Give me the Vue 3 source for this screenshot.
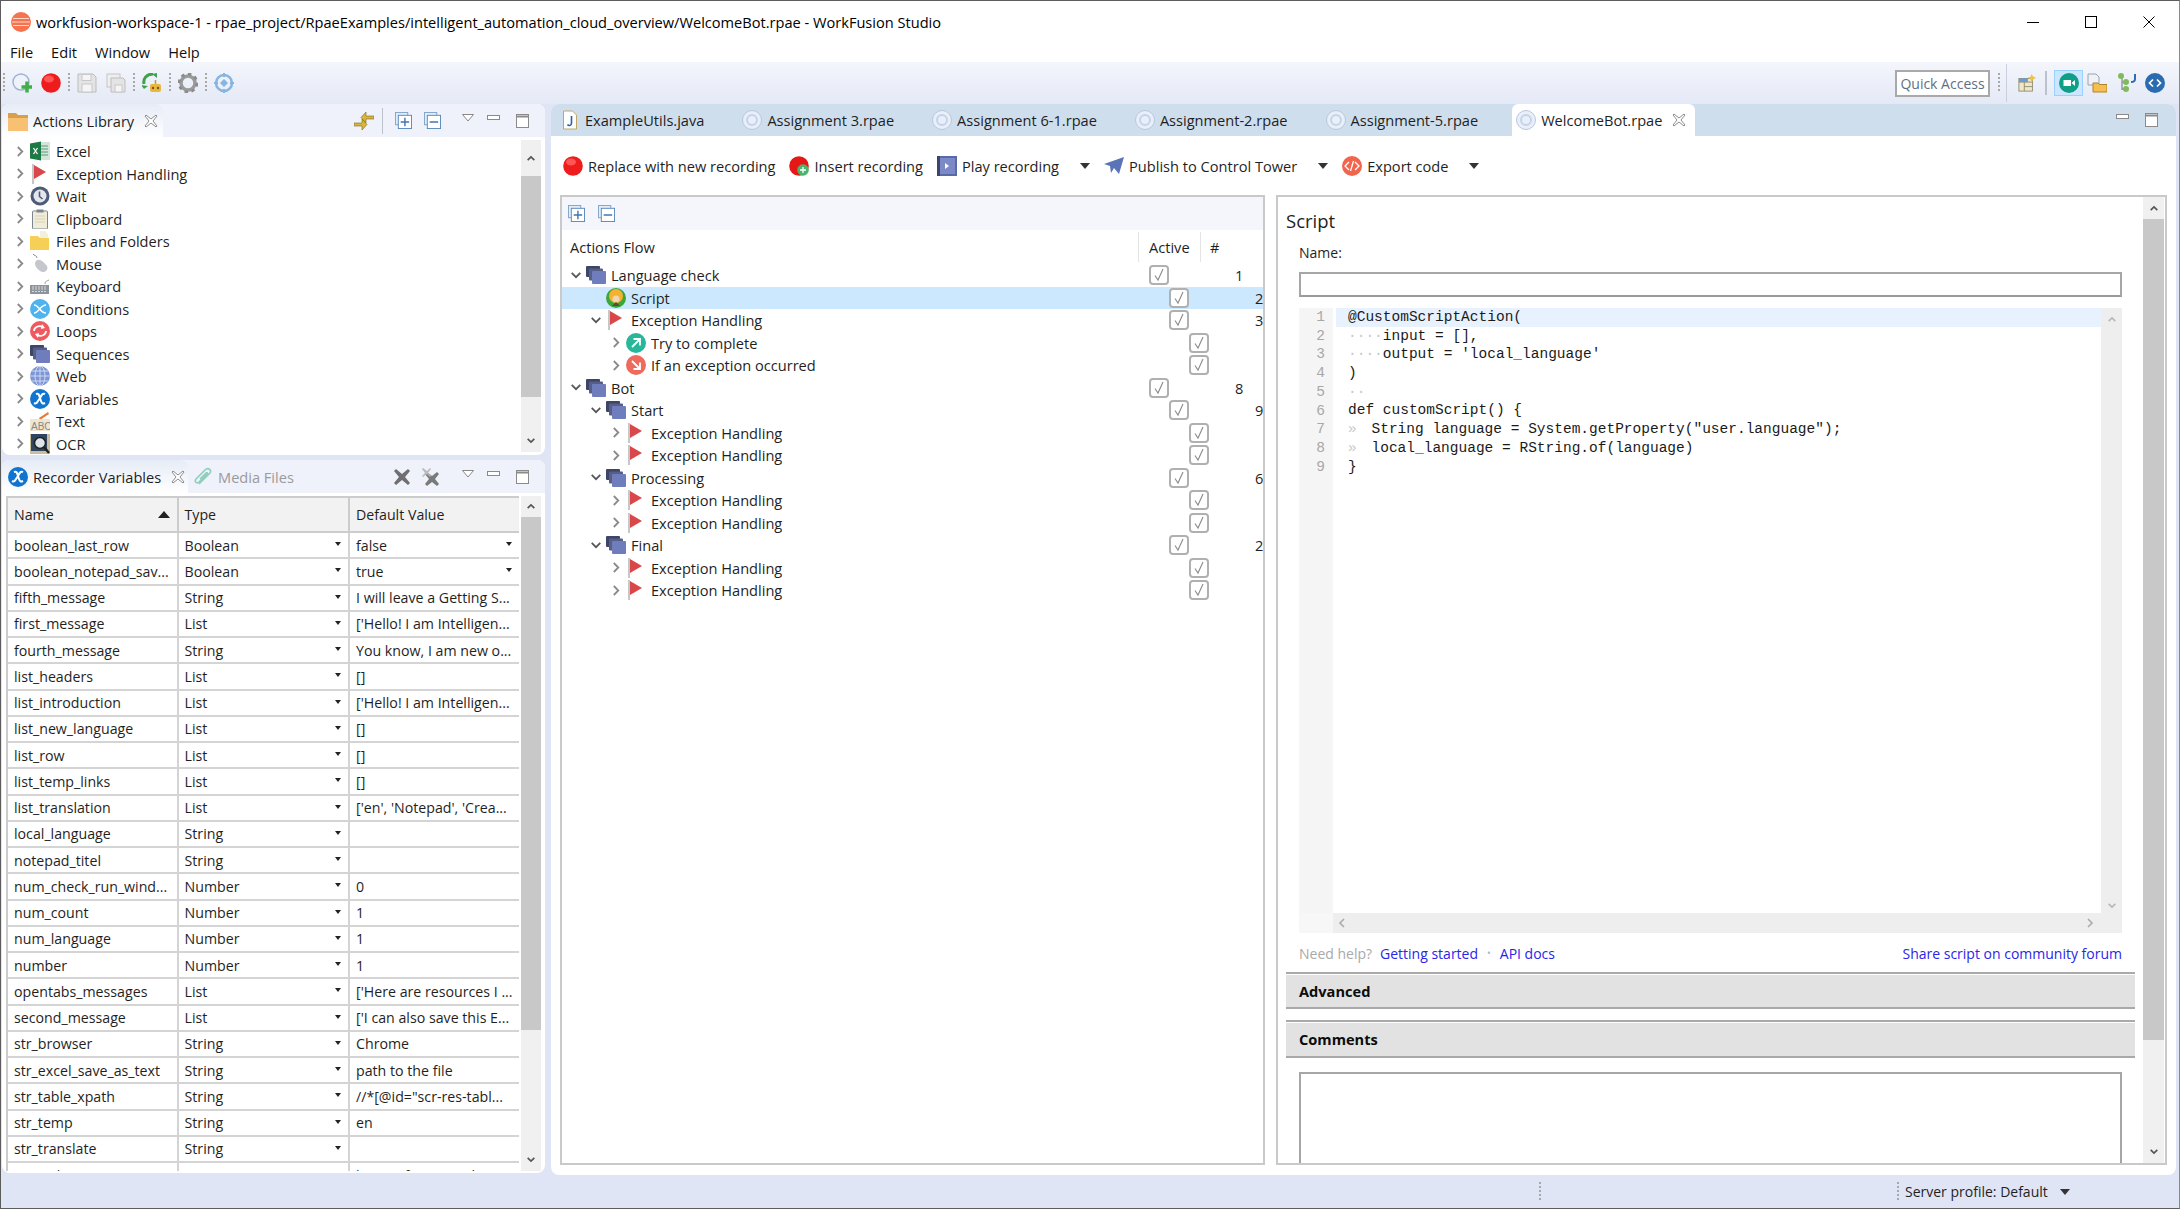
<template>
  <svg class="sprite" width="0" height="0">
    <defs>
      <symbol id="i-chev-r" viewBox="0 0 10 14"><path d="M2 2l5 5-5 5" fill="none" stroke="#8a8a8a" stroke-width="2"/></symbol>
      <symbol id="i-chev-d" viewBox="0 0 14 10"><path d="M2 2l5 5 5-5" fill="none" stroke="#555" stroke-width="2"/></symbol>
      <symbol id="i-up" viewBox="0 0 12 8"><path d="M2 6l4-4 4 4" fill="none" stroke="#555" stroke-width="2"/></symbol>
      <symbol id="i-down" viewBox="0 0 12 8"><path d="M2 2l4 4 4-4" fill="none" stroke="#555" stroke-width="2"/></symbol>
      <symbol id="i-excel" viewBox="0 0 20 20"><rect x="7" y="1" width="13" height="18" fill="#d5e5da"/><path d="M11 5h7M11 8h7M11 11h7M11 14h7" stroke="#5c9c78"/><path d="M0 2.500l11-2v19l-11-2z" fill="#1d7a45"/><path d="M3.500 7l4 6M7.500 7l-4 6" stroke="#fff" stroke-width="1.300"/></symbol>
      <symbol id="i-flag" viewBox="0 0 20 20"><path d="M3 0v20" stroke="#b5b5b5" stroke-width="1.500"/><path d="M4 1l12 7-12 7z" fill="#d9474b"/></symbol>
      <symbol id="i-wait" viewBox="0 0 20 20"><circle cx="10" cy="10" r="9.500" fill="#4d5a78"/><circle cx="10" cy="10" r="6.500" fill="#e3e6ec"/><path d="M9.500 5.500v5l3 2.500" fill="none" stroke="#4d5a78" stroke-width="1.600"/></symbol>
      <symbol id="i-clip" viewBox="0 0 20 20"><rect x="2.500" y="2" width="15" height="18" rx="1" fill="#f0ecd9" stroke="#7d8590"/><rect x="6.500" y="0.500" width="7" height="3" fill="#7d8590"/><path d="M5 7h10M5 10h10M5 13h10" stroke="#d8d2b5"/></symbol>
      <symbol id="i-folder" viewBox="0 0 20 20"><path d="M10 0h5l3 3v6h-8z" fill="#f4efd8"/><path d="M0 5h8l2 2h9v12H0z" fill="#f6cf57"/></symbol>
      <symbol id="i-mouse" viewBox="0 0 20 20"><path d="M3 0c1 2 4 1 4 4" fill="none" stroke="#8a8a8a"/><path d="M6 7c3-3 7 0 11 5 2 4-3 8-7 5C7 15 3 10 6 7z" fill="#c4c8cc"/></symbol>
      <symbol id="i-kbd" viewBox="0 0 20 20"><path d="M15 8c0-3 2-3 4-4" fill="none" stroke="#999"/><path d="M0 9h19v9H0z" fill="#8f949b"/><path d="M2 11h15M2 13h15M2 15.500h15" stroke="#d6d8db" stroke-dasharray="2 1"/></symbol>
      <symbol id="i-cond" viewBox="0 0 20 20"><circle cx="10" cy="10" r="10" fill="#4fb3f0"/><path d="M4 6c5 0 6 8 12 8M4 14c5 0 6-8 12-8" fill="none" stroke="#fff" stroke-width="1.400"/></symbol>
      <symbol id="i-loop" viewBox="0 0 20 20"><circle cx="10" cy="10" r="10" fill="#ef5a5f"/><path d="M4 10c0-4 5-6 9-4M16 10c0 4-5 6-9 4" fill="none" stroke="#fff" stroke-width="1.800"/><path d="M12 3l3 4-4 1zM8 17l-3-4 4-1z" fill="#fff"/></symbol>
      <symbol id="i-seq" viewBox="0 0 20 20"><rect x="0" y="1" width="14" height="11" rx="1" fill="#3d4668"/><rect x="3" y="3.500" width="14" height="12" rx="1" fill="#555f88"/><rect x="6" y="6" width="14" height="13" rx="1" fill="#6f7dbd"/></symbol>
      <symbol id="i-web" viewBox="0 0 20 20"><circle cx="10" cy="10" r="10" fill="#7d96d6"/><path d="M0 10h20M2 5h16M2 15h16M10 0v20" stroke="#dfe6f7" stroke-width=".8"/><ellipse cx="10" cy="10" rx="5" ry="10" fill="none" stroke="#dfe6f7" stroke-width=".8"/></symbol>
      <symbol id="i-var" viewBox="0 0 20 20"><circle cx="10" cy="10" r="10" fill="#0f75d0"/><path d="M6 5c3-1 3 1 4 4l1 3c1 3 2 3 4 2M15 5c-2-1-3 0-5 4l-2 3c-1 2-2 3-4 2" fill="none" stroke="#fff" stroke-width="2"/></symbol>
      <symbol id="i-text" viewBox="0 0 20 20"><path d="M9 7l9-6 1 2-9 6z" fill="#e9793b"/><rect x="0" y="8" width="20" height="12" fill="#eee6cf"/><text x="1" y="18.500" font-size="10" font-family="Liberation Sans" fill="#888">ABC</text></symbol>
      <symbol id="i-ocr" viewBox="0 0 20 20"><rect x="0" y="0" width="20" height="20" fill="#c9bf9d"/><rect x="1" y="0" width="16" height="17" fill="#2f4560"/><circle cx="10" cy="9" r="5.500" fill="#dde4ea" stroke="#222" stroke-width="1.500"/><path d="M14 13l5 6" stroke="#222" stroke-width="2.500"/></symbol>
      <symbol id="i-rpae" viewBox="0 0 20 20"><circle cx="10" cy="10" r="9.500" fill="#e9eff8" stroke="#b8c6de"/><circle cx="10" cy="10" r="5" fill="none" stroke="#c5d3ea" stroke-width="2"/></symbol>
      <symbol id="i-java" viewBox="0 0 20 20"><path d="M3.500 1h9l4 4v14h-13z" fill="#fff" stroke="#c1a868"/><path d="M11.500 6v7c0 3-3 3-4 1.500" fill="none" stroke="#2d5fa8" stroke-width="1.600"/></symbol>
      <symbol id="i-lib" viewBox="0 0 20 20"><path d="M0 2h8l2 2h10v16H0z" fill="#d8a04a"/><path d="M0 7h20v13H0z" fill="#f8c073"/></symbol>
      <symbol id="i-clip2" viewBox="0 0 20 20"><path d="M6 17L17 6c2-3-2-6-5-3L3 12c-2 3 1 5 3 3l8-8c1-1 0-2-1-1l-6 6" fill="none" stroke="#8fd0bd" stroke-width="1.600"/></symbol>
      <symbol id="i-close" viewBox="0 0 14 14"><path d="M2 1l5 4 5-4 1 1-4 5 4 5-1 1-5-4-5 4-1-1 4-5-4-5z" fill="#fff" stroke="#8d8d8d"/></symbol>
      <symbol id="i-menu" viewBox="0 0 12 8"><path d="M.5.500h11L6 7z" fill="#fff" stroke="#888"/></symbol>
      <symbol id="i-min" viewBox="0 0 13 6"><rect x=".5" y=".5" width="12" height="4" fill="#fff" stroke="#8a8a8a"/></symbol>
      <symbol id="i-max" viewBox="0 0 13 14"><rect x=".5" y=".5" width="12" height="13" fill="#fff" stroke="#8a8a8a"/><path d="M.5 2.500h12" stroke="#8a8a8a" stroke-width="2"/></symbol>
      <symbol id="i-expand" viewBox="0 0 18 18"><rect x=".5" y=".5" width="13" height="13" fill="#e3edf8" stroke="#7fa3cc"/><rect x="3.500" y="3.500" width="14" height="14" fill="#fff" stroke="#5a88bd"/><path d="M10.500 6v9M6 10.500h9" stroke="#3f76b3" stroke-width="1.500"/></symbol>
      <symbol id="i-collapse" viewBox="0 0 18 18"><rect x=".5" y=".5" width="13" height="13" fill="#e3edf8" stroke="#7fa3cc"/><rect x="3.500" y="3.500" width="14" height="14" fill="#fff" stroke="#5a88bd"/><path d="M6 10.500h9" stroke="#3f76b3" stroke-width="1.500"/></symbol>
      <symbol id="i-pin" viewBox="0 0 20 20"><path d="M12 1v4h8v3h-8v4L7 6.500zM8 19v-4H0v-3h8V8l5 5.500z" fill="#d9b53a" stroke="#7d6a22" stroke-width=".6"/></symbol>
      <symbol id="i-x" viewBox="0 0 18 18"><path d="M3 1l6 5 6-5 2 2-5 6 5 6-2 2-6-5-6 5-2-2 5-6-5-6z" fill="#6f6f6f"/></symbol>
      <symbol id="i-xx" viewBox="0 0 20 20"><path d="M6 5l5 4 5-4 2 2-4 5 4 5-2 2-5-4-5 4-2-2 4-5-4-5z" fill="#7a7a7a"/><path d="M2 1l4 3 3-3 1 1-3 4 3 3-1 1-3-3-4 3-1-1 3-3-3-4z" fill="#bbb"/></symbol>
      <symbol id="i-record" viewBox="0 0 20 20"><circle cx="10" cy="10" r="9.800" fill="#ee1c1c"/><ellipse cx="8" cy="6" rx="5" ry="3.500" fill="#f55"/></symbol>
      <symbol id="i-insert" viewBox="0 0 20 20"><circle cx="10" cy="10" r="9.800" fill="#e61717"/><circle cx="14" cy="14" r="5.800" fill="#4ab56c"/><path d="M14 11v6M11 14h6" stroke="#fff" stroke-width="1.300"/></symbol>
      <symbol id="i-play" viewBox="0 0 20 20"><rect width="20" height="20" fill="#5a6aa8"/><rect x="2" y="2" width="16" height="16" fill="#7b89c6"/><path d="M8 7l4 3-4 3z" fill="#fff"/><path d="M0 0h3v20H0z" fill="#3d4668"/></symbol>
      <symbol id="i-publish" viewBox="0 0 20 20"><path d="M0 8L20 1l-5 17-5-6-3 5-1-7z" fill="#5b73b8"/></symbol>
      <symbol id="i-export" viewBox="0 0 20 20"><circle cx="10" cy="10" r="10" fill="#f1654d"/><path d="M7 6l-4 4 4 4M13 6l4 4-4 4M11.500 5l-3 10" fill="none" stroke="#fff" stroke-width="1.300"/></symbol>
      <symbol id="i-script" viewBox="0 0 20 20"><circle cx="10" cy="10" r="10" fill="#3ca63c"/><circle cx="10" cy="8" r="7" fill="#f5b230"/><circle cx="10" cy="11" r="3.500" fill="#f0d6b4"/><path d="M6 18l4-4 4 4z" fill="#5d4a3a"/></symbol>
      <symbol id="i-try" viewBox="0 0 20 20"><circle cx="10" cy="10" r="10" fill="#27b79b"/><path d="M6 14l8-8M7.500 6H14v6.500" fill="none" stroke="#fff" stroke-width="1.800"/></symbol>
      <symbol id="i-catch" viewBox="0 0 20 20"><circle cx="10" cy="10" r="10" fill="#ee6a5c"/><path d="M6 6l8 8M14 7.500V14H7.500" fill="none" stroke="#fff" stroke-width="1.800"/></symbol>
      <symbol id="i-add" viewBox="0 0 20 20"><circle cx="9" cy="9" r="8" fill="#eef2fa" stroke="#9fb2d2" stroke-width="1.400"/><path d="M15 8.500v11M9.500 14h11" stroke="#3fae49" stroke-width="3.500"/></symbol>
      <symbol id="i-save" viewBox="0 0 20 20"><path d="M1 1h15l3 3v15H1z" fill="#e4e4e4" stroke="#bdbdbd"/><rect x="5" y="1.500" width="9" height="6" fill="#f5f5f5" stroke="#c8c8c8"/><rect x="5" y="11" width="10" height="8" fill="#f5f5f5" stroke="#c8c8c8"/></symbol>
      <symbol id="i-saveall" viewBox="0 0 20 20"><rect x="1" y="1" width="13" height="13" fill="#eee" stroke="#c5c5c5"/><path d="M5 5h12l2 2v12H5z" fill="#e4e4e4" stroke="#bdbdbd"/><rect x="9" y="12" width="7" height="7" fill="#f5f5f5" stroke="#c8c8c8"/></symbol>
      <symbol id="i-run" viewBox="0 0 20 20"><path d="M11 1C4 1 1 6 2 11" fill="none" stroke="#3fa14a" stroke-width="3"/><path d="M6 13l-4 3-3-4z" fill="#3fa14a"/><path d="M10 1l5-1v5z" fill="#3fa14a"/><rect x="8" y="11" width="11" height="8" rx="2" fill="#e9b63f"/><circle cx="11" cy="15" r="1.200" fill="#7a5a10"/><circle cx="16" cy="15" r="1.200" fill="#7a5a10"/><path d="M13.500 11V7" stroke="#c89a2a" stroke-width="1.500"/></symbol>
      <symbol id="i-gear" viewBox="0 0 20 20"><circle cx="10" cy="10" r="7" fill="none" stroke="#9a9a9a" stroke-width="3.500"/><circle cx="10" cy="10" r="9" fill="none" stroke="#8a8a8a" stroke-width="2.500" stroke-dasharray="3.500 3.500"/></symbol>
      <symbol id="i-target" viewBox="0 0 20 20"><circle cx="10" cy="10" r="8" fill="none" stroke="#85b5e0" stroke-width="2.500"/><path d="M10 0v4M10 16v4M0 10h4M16 10h4" stroke="#85b5e0" stroke-width="2"/><path d="M10 6l4 4-4 4-4-4z" fill="#85b5e0"/></symbol>
      <symbol id="i-persp" viewBox="0 0 20 20"><rect x="1" y="5" width="15" height="14" fill="#f0e6c8" stroke="#8c8c70"/><path d="M1 9h15M7 9v10M7 14h9" stroke="#8c8c70"/><rect x="1" y="5" width="10" height="4" fill="#6e9bd0"/><path d="M15 0l2 3 3 1-3 2-2 3-1-3-3-2 3-1z" fill="#f0c33c"/></symbol>
      <symbol id="i-cam" viewBox="0 0 20 20"><circle cx="10" cy="10" r="10" fill="#0f9e86"/><rect x="4.500" y="7" width="7.500" height="6" fill="#fff"/><path d="M12.500 10l3.500-3v6z" fill="#fff"/></symbol>
      <symbol id="i-docs" viewBox="0 0 20 20"><path d="M1 1h8l3 3v8H1z" fill="#eef1f6" stroke="#9aa3b0"/><path d="M6 10h5l1.500 1.500H20V19H6z" fill="#f5bf4f" stroke="#b0812a"/></symbol>
      <symbol id="i-tree" viewBox="0 0 20 20"><path d="M6 2v15M6 9h6M6 16h6" stroke="#888" stroke-width="1.200"/><circle cx="5" cy="3" r="3" fill="#7fbb5d"/><circle cx="10" cy="9" r="3" fill="#7fbb5d"/><circle cx="10" cy="16" r="3" fill="#7fbb5d"/><path d="M19 1v5c0 2-2 3-4 3" fill="none" stroke="#2e6db4" stroke-width="2"/></symbol>
      <symbol id="i-code" viewBox="0 0 20 20"><circle cx="10" cy="10" r="10" fill="#2b6cb0"/><path d="M8 6.500L4.500 10 8 13.500M12 6.500l3.500 3.500-3.500 3.500" fill="none" stroke="#fff" stroke-width="1.700"/></symbol>
      <symbol id="i-app" viewBox="0 0 20 20"><circle cx="10" cy="10" r="10" fill="#f5734f"/><path d="M2 6.500h16M1 10h18M2 13.500h16" stroke="#ffd9c9" stroke-width="1.200"/></symbol>
    </defs>
  </svg>

  <div class="window">
    <header class="titlebar">
      <svg class="ic20"><use href="#i-app" /></svg>
      <span class="title-text">workfusion-workspace-1 - rpae_project/RpaeExamples/intelligent_automation_cloud_overview/WelcomeBot.rpae - WorkFusion Studio</span>
      <div class="win-btns">
        <svg width="12" height="12" viewBox="0 0 12 12"><path d="M0 6.500h12" stroke="#000" /></svg>
        <svg width="12" height="12" viewBox="0 0 12 12"><rect x=".5" y=".5" width="11" height="11" fill="none" stroke="#000" /></svg>
        <svg width="12" height="12" viewBox="0 0 12 12"><path d="M.5.500l11 11M11.500.5l-11 11" stroke="#000" /></svg>
      </div>
    </header>

    <nav class="menubar">
      <span v-for="m in menus" :key="m">{{ m }}</span>
    </nav>

    <div class="toolbar">
      <template v-for="(t, i) in mainTools" :key="i">
        <span v-if="t === '|'" class="grip"></span>
        <svg v-else class="ic20 tool"><use :href="'#i-' + t" /></svg>
      </template>
      <div class="tool-right">
        <span class="quick">Quick Access</span>
        <span class="grip grip-q"></span>
        <span class="curve"></span>
        <svg class="ic18"><use href="#i-persp" /></svg>
        <span class="vsep"></span>
        <span class="cam-btn"><svg class="ic20"><use href="#i-cam" /></svg></span>
        <svg class="ic20"><use href="#i-docs" /></svg>
        <svg class="ic20 tree-ic"><use href="#i-tree" /></svg>
        <svg class="ic20"><use href="#i-code" /></svg>
      </div>
    </div>

    <main class="workspace">
      <div class="left-col">
        <section class="panel lib-panel">
          <div class="panel-head">
            <div class="view-tab lib-tab">
              <svg class="ic20"><use href="#i-lib" /></svg>
              <span>Actions Library</span>
              <svg class="close"><use href="#i-close" /></svg>
            </div>
            <div class="head-tools">
              <svg class="ic20 pin"><use href="#i-pin" /></svg>
              <span class="vsep small"></span>
              <svg class="ic17 ex1"><use href="#i-expand" /></svg>
              <svg class="ic17 ex2"><use href="#i-collapse" /></svg>
              <svg class="menu-ic"><use href="#i-menu" /></svg>
              <svg class="min-ic"><use href="#i-min" /></svg>
              <svg class="max-ic"><use href="#i-max" /></svg>
            </div>
          </div>
          <div class="lib-body">
            <ul class="lib-tree">
              <li v-for="a in library" :key="a.name">
                <svg class="chev-r"><use href="#i-chev-r" /></svg>
                <svg class="ic20 lib-ic"><use :href="'#i-' + a.icon" /></svg>
                <span>{{ a.name }}</span>
              </li>
            </ul>
            <div class="sb sb-lib">
              <div class="sb-top"><svg class="arrow"><use href="#i-up" /></svg></div>
              <div class="sb-thumb"></div>
              <div class="sb-rest"><svg class="arrow"><use href="#i-down" /></svg></div>
            </div>
          </div>
        </section>

        <section class="panel var-panel">
          <div class="panel-head">
            <div class="view-tab var-tab">
              <svg class="ic20"><use href="#i-var" /></svg>
              <span>Recorder Variables</span>
              <svg class="close"><use href="#i-close" /></svg>
            </div>
            <div class="media-tab">
              <svg class="ic20"><use href="#i-clip2" /></svg>
              <span>Media Files</span>
            </div>
            <div class="head-tools">
              <svg class="ic18 del1"><use href="#i-x" /></svg>
              <svg class="ic20 del2"><use href="#i-xx" /></svg>
              <svg class="menu-ic"><use href="#i-menu" /></svg>
              <svg class="min-ic"><use href="#i-min" /></svg>
              <svg class="max-ic"><use href="#i-max" /></svg>
            </div>
          </div>
          <div class="var-body">
            <div class="var-table">
              <div class="var-row var-header">
                <div class="cell">Name<span class="sort"></span></div>
                <div class="cell">Type</div>
                <div class="cell">Default Value</div>
              </div>
              <div v-for="v in variables" :key="v.name" class="var-row">
                <div class="cell">{{ v.name }}</div>
                <div class="cell">{{ v.type }}<span class="drop"></span></div>
                <div class="cell">{{ v.value }}<span v-if="v.type === 'Boolean'" class="drop"></span></div>
              </div>
            </div>
            <div class="sb sb-var">
              <div class="sb-top"><svg class="arrow"><use href="#i-up" /></svg></div>
              <div class="sb-thumb"></div>
              <div class="sb-rest"><svg class="arrow"><use href="#i-down" /></svg></div>
            </div>
          </div>
        </section>
      </div>

      <section class="editor-panel">
        <div class="editor-tabs">
          <div v-for="t in editorTabs" :key="t.name" class="ed-tab">
            <svg class="ic20"><use :href="'#i-' + t.icon" /></svg>
            <span>{{ t.name }}</span>
          </div>
          <div class="ed-tab active">
            <svg class="ic20"><use href="#i-rpae" /></svg>
            <span>WelcomeBot.rpae</span>
            <svg class="close"><use href="#i-close" /></svg>
          </div>
          <div class="ed-controls">
            <svg class="min-ic"><use href="#i-min" /></svg>
            <svg class="max-ic"><use href="#i-max" /></svg>
          </div>
        </div>

        <div class="rec-bar">
          <span class="rec-item"><svg class="ic20"><use href="#i-record" /></svg>Replace with new recording</span>
          <span class="rec-item"><svg class="ic20"><use href="#i-insert" /></svg>Insert recording</span>
          <span class="rec-item"><svg class="ic20"><use href="#i-play" /></svg>Play recording<span class="drop2"></span></span>
          <span class="rec-item"><svg class="ic20"><use href="#i-publish" /></svg>Publish to Control Tower<span class="drop2"></span></span>
          <span class="rec-item"><svg class="ic20"><use href="#i-export" /></svg>Export code<span class="drop2"></span></span>
        </div>

        <div class="split">
          <div class="flow">
            <div class="flow-tools">
              <svg class="ic17"><use href="#i-expand" /></svg>
              <svg class="ic17"><use href="#i-collapse" /></svg>
            </div>
            <div class="flow-head">
              <span class="fh-name">Actions Flow</span>
              <span class="fh-active">Active</span>
              <span class="fh-num">#</span>
            </div>
            <div v-for="(r, i) in flow" :key="i" class="flow-row" :class="{ selected: r.name === 'Script' }">
              <div class="flow-name" :class="'lvl' + r.level">
                <span class="tw">
                  <svg v-if="r.open === true" class="tw-open"><use href="#i-chev-d" /></svg>
                  <svg v-else-if="r.open === false" class="tw-closed"><use href="#i-chev-r" /></svg>
                </span>
                <svg class="ic20"><use :href="'#i-' + r.icon" /></svg>
                <span>{{ r.name }}</span>
              </div>
              <div class="flow-check">
                <span class="check">
                  <svg width="14" height="14" viewBox="0 0 14 14"><path d="M3 7.500l3 4.500 5-11" fill="none" stroke="#8a8a8a" stroke-width="1.100" /></svg>
                </span>
              </div>
              <div class="flow-num">{{ r.num }}</div>
            </div>
          </div>

          <div class="props">
            <div class="props-body">
              <h2 class="props-title">Script</h2>
              <div class="field-label">Name:</div>
              <div class="text-input"></div>
              <div class="code-ed">
                <div class="gutter">
                  <div v-for="(c, i) in code" :key="i">{{ i + 1 }}</div>
                </div>
                <div class="code">
                  <div v-for="(c, i) in code" :key="i" class="code-line" :class="{ current: i === 0 }">
                    <span v-if="c.ws" class="ws" :class="{ tab: c.ws === '»' }">{{ c.ws }}</span>{{ c.text }}
                  </div>
                </div>
                <div class="code-vs">
                  <svg class="arrow light"><use href="#i-up" /></svg>
                  <svg class="arrow light"><use href="#i-down" /></svg>
                </div>
                <div class="code-corner"></div>
                <div class="code-hs">
                  <svg class="arrow-h" viewBox="0 0 8 12"><path d="M6 2L2 6l4 4" fill="none" stroke="#aaa" stroke-width="1.600" /></svg>
                  <svg class="arrow-h" viewBox="0 0 8 12"><path d="M2 2l4 4-4 4" fill="none" stroke="#aaa" stroke-width="1.600" /></svg>
                </div>
              </div>
              <div class="help">
                <span class="help-need">Need help?</span>
                <a class="link">Getting started</a>
                <span class="help-dot">•</span>
                <a class="link">API docs</a>
                <a class="link share">Share script on community forum</a>
              </div>
              <div class="section adv">Advanced</div>
              <div class="section com">Comments</div>
              <div class="comment-box"></div>
            </div>
            <div class="sb sb-props">
              <div class="sb-top"><svg class="arrow"><use href="#i-up" /></svg></div>
              <div class="sb-thumb"></div>
              <div class="sb-rest"><svg class="arrow"><use href="#i-down" /></svg></div>
            </div>
          </div>
        </div>
      </section>
    </main>

    <footer class="statusbar">
      <span class="grip status-grip1"></span>
      <span class="grip status-grip2"></span>
      <span class="status-text">Server profile: Default</span>
      <span class="drop2 status-drop"></span>
    </footer>
  </div>
</template>

<script setup>
const menus = ['File', 'Edit', 'Window', 'Help']
const mainTools = ['|', 'add', 'record', '|', 'save', 'saveall', '|', 'run', '|', 'gear', '|', 'target']

const library = [
  { name: 'Excel', icon: 'excel' },
  { name: 'Exception Handling', icon: 'flag' },
  { name: 'Wait', icon: 'wait' },
  { name: 'Clipboard', icon: 'clip' },
  { name: 'Files and Folders', icon: 'folder' },
  { name: 'Mouse', icon: 'mouse' },
  { name: 'Keyboard', icon: 'kbd' },
  { name: 'Conditions', icon: 'cond' },
  { name: 'Loops', icon: 'loop' },
  { name: 'Sequences', icon: 'seq' },
  { name: 'Web', icon: 'web' },
  { name: 'Variables', icon: 'var' },
  { name: 'Text', icon: 'text' },
  { name: 'OCR', icon: 'ocr' },
]

const variables = [
  { name: 'boolean_last_row', type: 'Boolean', value: 'false' },
  { name: 'boolean_notepad_sav...', type: 'Boolean', value: 'true' },
  { name: 'fifth_message', type: 'String', value: 'I will leave a Getting S...' },
  { name: 'first_message', type: 'List', value: "['Hello! I am Intelligen..." },
  { name: 'fourth_message', type: 'String', value: 'You know, I am new o...' },
  { name: 'list_headers', type: 'List', value: '[]' },
  { name: 'list_introduction', type: 'List', value: "['Hello! I am Intelligen..." },
  { name: 'list_new_language', type: 'List', value: '[]' },
  { name: 'list_row', type: 'List', value: '[]' },
  { name: 'list_temp_links', type: 'List', value: '[]' },
  { name: 'list_translation', type: 'List', value: "['en', 'Notepad', 'Crea..." },
  { name: 'local_language', type: 'String', value: '' },
  { name: 'notepad_titel', type: 'String', value: '' },
  { name: 'num_check_run_wind...', type: 'Number', value: '0' },
  { name: 'num_count', type: 'Number', value: '1' },
  { name: 'num_language', type: 'Number', value: '1' },
  { name: 'number', type: 'Number', value: '1' },
  { name: 'opentabs_messages', type: 'List', value: "['Here are resources I ..." },
  { name: 'second_message', type: 'List', value: "['I can also save this E..." },
  { name: 'str_browser', type: 'String', value: 'Chrome' },
  { name: 'str_excel_save_as_text', type: 'String', value: 'path to the file' },
  { name: 'str_table_xpath', type: 'String', value: '//*[@id="scr-res-tabl...' },
  { name: 'str_temp', type: 'String', value: 'en' },
  { name: 'str_translate', type: 'String', value: '' },
  { name: 'str_website', type: 'String', value: 'https://finance.yah...' },
]

const editorTabs = [
  { name: 'ExampleUtils.java', icon: 'java' },
  { name: 'Assignment 3.rpae', icon: 'rpae' },
  { name: 'Assignment 6-1.rpae', icon: 'rpae' },
  { name: 'Assignment-2.rpae', icon: 'rpae' },
  { name: 'Assignment-5.rpae', icon: 'rpae' },
]

const handler = (num) => ({ name: 'Exception Handling', icon: 'flag', level: 2, open: false, num })
const flow = [
  { name: 'Language check', icon: 'seq', level: 0, open: true, num: 1 },
  { name: 'Script', icon: 'script', level: 1, open: null, num: 2 },
  { name: 'Exception Handling', icon: 'flag', level: 1, open: true, num: 3 },
  { name: 'Try to complete', icon: 'try', level: 2, open: false, num: '' },
  { name: 'If an exception occurred', icon: 'catch', level: 2, open: false, num: '' },
  { name: 'Bot', icon: 'seq', level: 0, open: true, num: 8 },
  { name: 'Start', icon: 'seq', level: 1, open: true, num: 9 },
  handler(10),
  handler(55),
  { name: 'Processing', icon: 'seq', level: 1, open: true, num: 62 },
  handler(63),
  handler(179),
  { name: 'Final', icon: 'seq', level: 1, open: true, num: 261 },
  handler(262),
  handler(293),
]

const code = [
  { ws: '', text: '@CustomScriptAction(' },
  { ws: '····', text: 'input = [],' },
  { ws: '····', text: "output = 'local_language'" },
  { ws: '', text: ')' },
  { ws: '··', text: '' },
  { ws: '', text: 'def customScript() {' },
  { ws: '»', text: 'String language = System.getProperty("user.language");' },
  { ws: '»', text: 'local_language = RString.of(language)' },
  { ws: '', text: '}' },
]
</script>

<style>
html,
body {
  margin: 0;
  background: #dfe5f5;
}
</style>

<style scoped>
.sprite {
  position: absolute;
}

.window {
  box-sizing: border-box;
  width: 2180px;
  height: 1209px;
  display: flex;
  flex-direction: column;
  overflow: hidden;
  background: #dfe5f5;
  border: 1px solid #5c5c5c;
  border-right-color: #8a8a8a;
  font-family: "Open Sans", "Noto Sans", sans-serif;
  font-size: 14.6px;
  color: #1f1f1f;
}

svg {
  display: block;
  flex: none;
}

.ic20 { width: 20px; height: 20px; }
.ic18 { width: 18px; height: 18px; }
.ic17 { width: 17px; height: 17px; }

.titlebar {
  height: 41px;
  flex: none;
  display: flex;
  align-items: center;
  padding-left: 10px;
  background: #fff;
  color: #000;
}

.title-text {
  margin-left: 5px;
  white-space: nowrap;
}

.win-btns {
  margin-left: auto;
  display: flex;
  gap: 46px;
  padding-right: 24px;
}

.menubar {
  height: 20px;
  flex: none;
  display: flex;
  align-items: center;
  gap: 18px;
  padding: 0 0 0 9px;
  background: #fff;
  color: #111;
}

.toolbar {
  height: 42px;
  flex: none;
  display: flex;
  align-items: center;
  gap: 7px;
  padding-left: 2px;
  background: linear-gradient(#f4f6fc, #e4e9f6);
}

.tool + .tool {
  margin-left: 2px;
}

.grip {
  width: 2px;
  height: 20px;
  background-image: linear-gradient(#a8a8a8 50%, transparent 50%);
  background-size: 2px 4px;
}

.tool-right {
  margin-left: auto;
  display: flex;
  align-items: center;
  padding-right: 14px;
}

.quick {
  box-sizing: border-box;
  width: 95px;
  height: 27px;
  border: 2px solid #a9a9a9;
  background: #fff;
  color: #5f6f85;
  font-size: 14px;
  text-align: center;
  line-height: 23px;
  white-space: nowrap;
}

.grip-q {
  margin-left: 8px;
}

.curve {
  width: 1px;
  height: 38px;
  margin: 0 11px 0 6px;
  background: #c9cfdd;
}

.vsep {
  width: 2px;
  height: 24px;
  margin: 0 7px 0 9px;
  background: #bcc2cc;
}

.cam-btn {
  box-sizing: border-box;
  width: 29px;
  height: 26px;
  margin-right: 4px;
  display: flex;
  align-items: center;
  justify-content: center;
  background: #cde6ff;
  border: 1px solid #99d1ff;
}

.tree-ic {
  margin: 0 9px;
}

.workspace {
  height: 1071px;
  flex: none;
  display: flex;
  gap: 6px;
  padding-left: 1px;
}

.left-col {
  width: 543px;
  flex: none;
  display: flex;
  flex-direction: column;
  gap: 5px;
}

.panel {
  display: flex;
  flex-direction: column;
  background: #fff;
  border-radius: 8px;
  overflow: hidden;
}

.lib-panel { height: 351px; }
.var-panel { height: 713px; }

.panel-head {
  height: 33px;
  flex: none;
  display: flex;
  align-items: stretch;
  background: #eff2fa;
}

.view-tab {
  display: flex;
  align-items: center;
  padding-left: 6px;
  background: linear-gradient(#e6ecf6, #fff);
  border-radius: 8px 8px 0 0;
}

.lib-tab { width: 155px; }
.var-tab { width: 180px; }

.view-tab span {
  margin-left: 5px;
  white-space: nowrap;
}

.close {
  width: 14px;
  height: 14px;
  margin-left: 10px;
}

.media-tab {
  display: flex;
  align-items: center;
  padding-left: 5px;
  color: #9a9a9a;
}

.media-tab span {
  margin-left: 5px;
}

.head-tools {
  margin-left: auto;
  display: flex;
  align-items: center;
  padding-right: 16px;
}

.vsep.small {
  height: 26px;
  width: 1px;
  margin: 0 12px 0 8px;
}

.ex2 {
  margin-left: 12px;
}

.menu-ic {
  width: 12px;
  height: 8px;
  margin: 0 0 6px 21px;
}

.min-ic {
  width: 13px;
  height: 6px;
  margin: 0 0 6px 13px;
}

.max-ic {
  width: 13px;
  height: 14px;
  margin-left: 16px;
}

.del2 {
  margin-left: 10px;
}

.lib-body {
  flex: 1;
  min-height: 0;
  display: flex;
  padding-top: 3px;
}

.lib-tree {
  flex: 1;
  margin: 0;
  padding: 0 0 0 14px;
  list-style: none;
}

.lib-tree li {
  height: 22.5px;
  display: flex;
  align-items: center;
}

.chev-r {
  width: 9px;
  height: 13px;
  margin-right: 5px;
}

.lib-ic {
  margin-right: 6px;
}

.sb {
  width: 20px;
  flex: none;
  display: flex;
  flex-direction: column;
  background: #f0f0f0;
}

.sb-top {
  flex: none;
  display: flex;
  align-items: center;
  justify-content: center;
}

.sb-thumb {
  flex: none;
  background: #c8c8c8;
}

.sb-rest {
  flex: 1;
  display: flex;
  align-items: flex-end;
  justify-content: center;
  padding-bottom: 8px;
}

.arrow {
  width: 10px;
  height: 7px;
}

.arrow.light {
  opacity: 0.35;
}

.sb-lib {
  margin: 0 4px 3px 0;
}

.sb-lib .sb-top { height: 36px; }
.sb-lib .sb-thumb { height: 221px; }

.var-body {
  flex: 1;
  min-height: 0;
  display: flex;
  padding: 3px 4px 2px 4px;
}

.var-table {
  flex: 1;
  overflow: hidden;
  font-size: 14.2px;
  border-top: 2px solid #ccc;
  border-left: 2px solid #ccc;
  margin-right: 2px;
  min-width: 0;
}

.var-row {
  box-sizing: border-box;
  display: grid;
  grid-template-columns: 170.5px 171.5px 171px;
  height: 26.25px;
  border-bottom: 2px solid #d4d4d4;
}

.var-header {
  height: 35px;
  background: #f2f2f2;
  border-bottom: 2px solid #ccc;
}

.cell {
  position: relative;
  display: flex;
  align-items: center;
  padding-left: 6px;
  border-right: 2px solid #d4d4d4;
  white-space: nowrap;
  overflow: hidden;
}

.var-header .cell {
  border-right-color: #ccc;
}

.sort {
  position: absolute;
  right: 7px;
  top: 13px;
  border: 6px solid transparent;
  border-top: 0;
  border-bottom: 7px solid #222;
}

.drop {
  position: absolute;
  right: 7px;
  top: 9px;
  border: 3.500px solid transparent;
  border-bottom: 0;
  border-top: 4px solid #222;
}

.sb-var .sb-top { height: 21px; }
.sb-var .sb-thumb { height: 513px; }

.editor-panel {
  flex: 1;
  min-width: 0;
  margin-right: 3px;
  display: flex;
  flex-direction: column;
  background: #fff;
  border-radius: 8px;
  overflow: hidden;
}

.editor-tabs {
  height: 32px;
  flex: none;
  display: flex;
  align-items: stretch;
  background: #cfdeec;
}

.ed-tab {
  display: flex;
  align-items: center;
  padding: 0 38px 0 9px;
  white-space: nowrap;
}

.ed-tab + .ed-tab {
  padding-left: 0;
}

.ed-tab span {
  margin-left: 5px;
}

.ed-tab.active {
  margin-left: -4px;
  padding: 0 9px 0 4px;
  background: #fff;
  border-radius: 6px 6px 0 0;
}

.ed-controls {
  margin-left: auto;
  display: flex;
  align-items: center;
  padding-right: 18px;
}

.ed-controls .min-ic {
  margin-left: 0;
}

.rec-bar {
  height: 59px;
  flex: none;
  display: flex;
  align-items: center;
  padding-left: 12px;
  gap: 14px;
}

.rec-item {
  display: flex;
  align-items: center;
  gap: 5px;
  white-space: nowrap;
}

.drop2 {
  display: block;
  margin-left: 16px;
  border: 5px solid transparent;
  border-bottom: 0;
  border-top: 6px solid #333;
}

.split {
  flex: 1;
  min-height: 0;
  display: flex;
  gap: 11px;
  padding: 0 9px 10px;
}

.flow {
  box-sizing: border-box;
  width: 705px;
  flex: none;
  border: 2px solid #c9c9c9;
  overflow: hidden;
}

.flow-tools {
  height: 33px;
  display: flex;
  align-items: center;
  gap: 13px;
  padding-left: 6px;
  background: #f4f6fb;
}

.flow-head {
  height: 34px;
  display: flex;
  align-items: center;
}

.fh-name {
  width: 577px;
  padding-left: 8px;
  box-sizing: border-box;
  border-right: 1px solid #e4e4e4;
  height: 30px;
  line-height: 30px;
}

.fh-active {
  width: 62px;
  padding-left: 10px;
  box-sizing: border-box;
  border-right: 1px solid #e4e4e4;
  height: 30px;
  line-height: 30px;
}

.fh-num {
  padding-left: 9px;
}

.flow-row {
  height: 22.5px;
  display: flex;
  align-items: center;
}

.flow-row.selected {
  background: #cce8ff;
}

.flow-name {
  width: 579px;
  flex: none;
  display: flex;
  align-items: center;
  white-space: nowrap;
}

.flow-name .ic20 {
  margin-right: 5px;
}

.lvl0 { padding-left: 8px; }
.lvl1 { padding-left: 28px; }
.lvl2 { padding-left: 48px; }

.tw {
  width: 16px;
  flex: none;
  display: flex;
  justify-content: flex-start;
}

.tw-open {
  width: 12px;
  height: 9px;
}

.tw-closed {
  width: 9px;
  height: 13px;
  margin-left: 2px;
}

.flow-check {
  width: 86px;
  flex: none;
}

.check {
  box-sizing: border-box;
  width: 20px;
  height: 20px;
  display: flex;
  align-items: center;
  justify-content: center;
  background: #fff;
  border: 2px solid #b0b0b0;
  border-radius: 4px;
}

.props {
  flex: 1;
  min-width: 0;
  display: flex;
  border: 2px solid #c9c9c9;
  border-bottom-width: 2px;
  overflow: hidden;
}

.props-body {
  flex: 1;
  min-width: 0;
  overflow: hidden;
  padding: 0 8px;
}

.props-title {
  margin: 11px 0 0;
  font-size: 18.5px;
  font-weight: 400;
  line-height: 26px;
}

.field-label {
  margin: 9px 13px 0;
  line-height: 20px;
  font-size: 14px;
}

.text-input {
  box-sizing: border-box;
  height: 25px;
  margin: 9px 13px 0;
  border: 2px solid #a6a6a6;
  border-bottom-color: #9a9a9a;
}

.code-ed {
  height: 625px;
  margin: 11px 13px 0;
  display: grid;
  grid-template-columns: 34px 1fr 21px;
  grid-template-rows: 1fr 20px;
}

.gutter {
  background: #f5f5f5;
  padding-right: 8px;
  text-align: right;
  color: #a8a8a8;
}

.gutter,
.code {
  font-family: "Liberation Mono", monospace;
  font-size: 14.5px;
  line-height: 18.7px;
}

.code {
  padding-left: 3px;
  color: #1a1a1a;
  white-space: pre;
  overflow: hidden;
}

.code-line {
  height: 18.700px;
  padding-left: 12px;
}

.code-line.current {
  background: #e8f2fe;
}

.ws {
  color: #c8c8c8;
}

.ws.tab {
  display: inline-block;
  width: 23.500px;
}

.code-vs {
  background: #eeeeee;
  display: flex;
  flex-direction: column;
  justify-content: space-between;
  align-items: center;
  padding: 8px 0 4px;
}

.code-corner {
  background: #f7f7f7;
}

.code-hs {
  grid-column: 2 / 4;
  background: #eeeeee;
  display: flex;
  align-items: center;
  justify-content: space-between;
  padding: 0 28px 0 5px;
}

.arrow-h {
  width: 8px;
  height: 12px;
}

.help {
  height: 20px;
  margin: 10px 13px 0;
  display: flex;
  align-items: center;
  white-space: nowrap;
  font-size: 14px;
}

.help-need {
  color: #a9a9a9;
  margin-right: 8px;
}

.link {
  color: #2a25ea;
}

.help-dot {
  margin: 0 9px;
  color: #a9b4d0;
  font-size: 10px;
}

.share {
  margin-left: auto;
}

.section {
  box-sizing: border-box;
  height: 37px;
  padding-left: 13px;
  display: flex;
  align-items: center;
  background: #e2e2e2;
  border-top: 2px solid #a9a9a9;
  border-bottom: 2px solid #a9a9a9;
  font-weight: 700;
  color: #0c0c0c;
  box-shadow: inset 0 1px 0 #fff;
}

.adv { margin-top: 9px; }
.com { margin-top: 11px; height: 38px; }

.comment-box {
  box-sizing: border-box;
  height: 140px;
  margin: 14px 13px 0;
  border: 2px solid #a6a6a6;
}

.sb-props .sb-top { height: 22px; }
.sb-props .sb-thumb { height: 821px; }

.sb-props {
  width: 21px;
  margin-right: 1px;
}

.statusbar {
  flex: 1;
  display: flex;
  align-items: center;
  padding-left: 1538px;
  background: #dfe5f5;
}

.status-grip2 {
  margin-left: 356px;
}

.status-text {
  margin-left: 6px;
  white-space: nowrap;
  font-size: 14px;
}

.status-drop {
  margin-left: 12px;
}
</style>
